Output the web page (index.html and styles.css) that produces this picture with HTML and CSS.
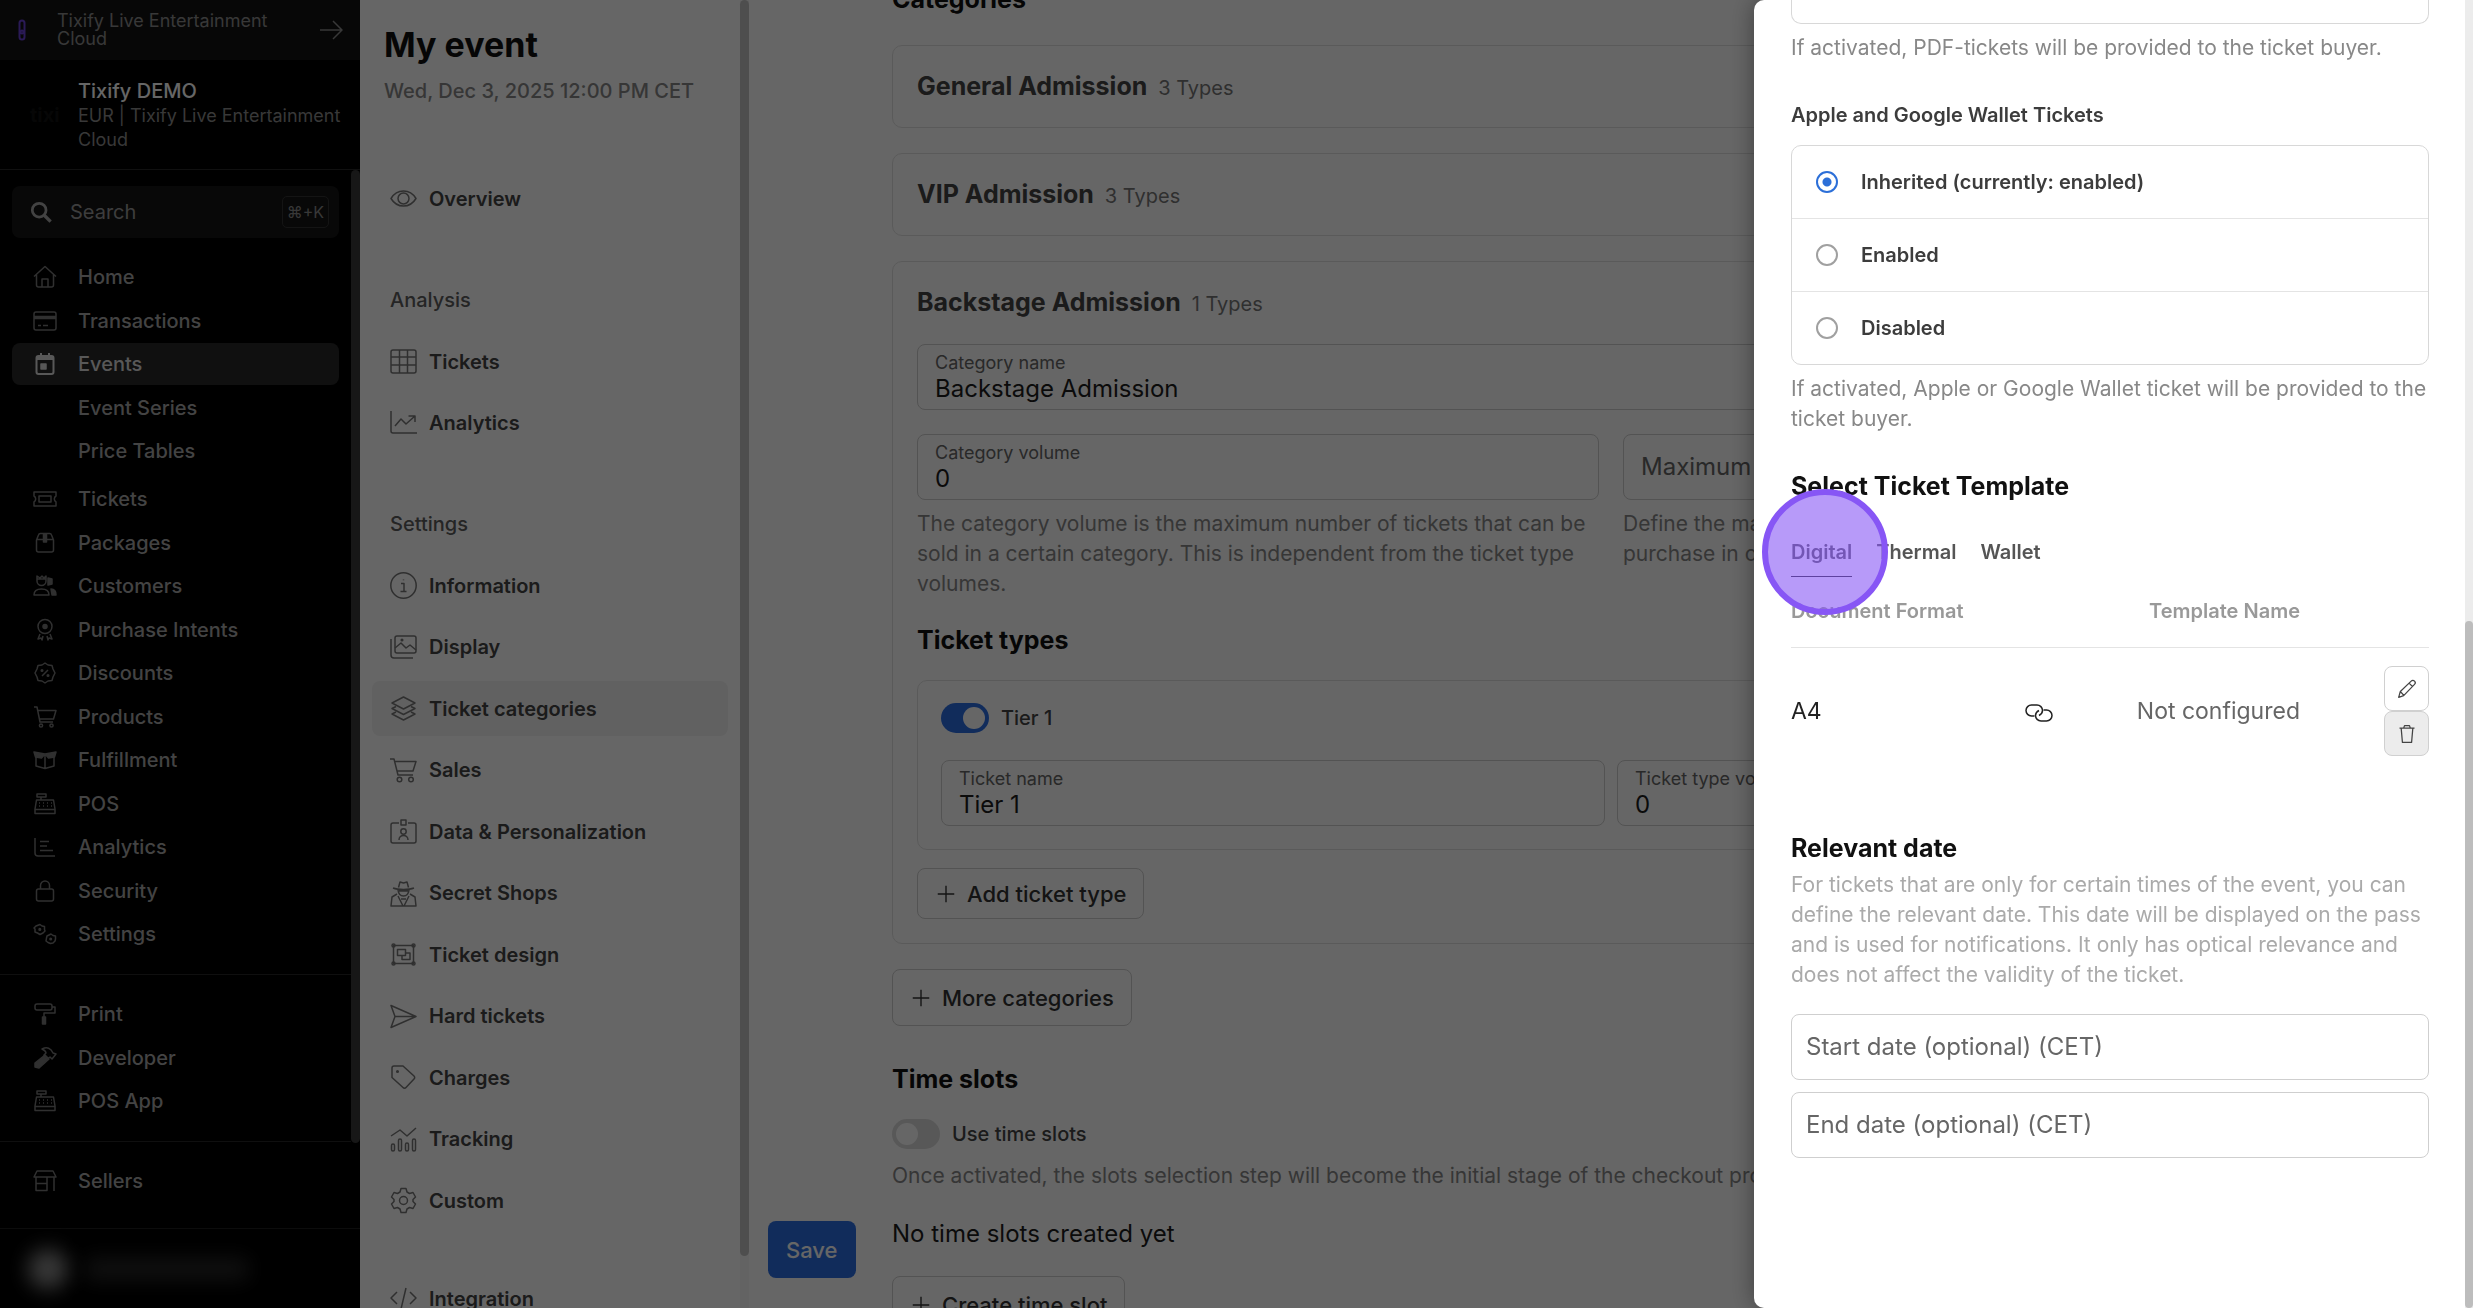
FILE: index.html
```html
<!DOCTYPE html>
<html lang="en">
<head>
  <meta charset="UTF-8" />
  <meta name="viewport" content="width=device-width, initial-scale=1.0" />
  <title>My event - Ticket categories</title>
  <link rel="stylesheet" href="styles.css">
</head>
<body>

  <!-- Icon sprite -->
  <svg class="sprite" aria-hidden="true">
    <symbol id="i-arrow" viewBox="0 0 24 24"><path d="M1 12h21M14 3l9 9-9 9"/></symbol>
    <symbol id="i-search" viewBox="0 0 24 24"><circle cx="10" cy="10" r="7.5" stroke-width="3"/><path d="M15.5 15.5l7 7" stroke-width="3.6"/></symbol>
    <symbol id="i-home" viewBox="0 0 24 24"><path d="M1 11.5L12 1.5l11 10M3.5 9.5V20a2 2 0 0 0 2 2h13a2 2 0 0 0 2-2V9.500M9 22v-8h6v8"/></symbol>
    <symbol id="i-card" viewBox="0 0 24 24"><rect x="1" y="3" width="22" height="18" rx="2"/><path d="M1 8.500h22" stroke-width="3.500"/><path d="M5 16.500h3M10 16.500h5"/></symbol>
    <symbol id="i-calendar" viewBox="0 0 24 24"><rect x="3.500" y="4" width="17" height="18" rx="2" stroke-width="2"/><path d="M3.500 6h17" stroke-width="4"/><path d="M8 1v4M16 1v4" stroke-width="2"/><path d="M8 12h5v5H8z" fill="currentColor"/></symbol>
    <symbol id="i-ticket" viewBox="0 0 24 24"><path d="M1 5h22v4a3.500 3.500 0 0 0 0 6v4H1v-4a3.500 3.500 0 0 0 0-6z"/><rect x="6" y="9" width="12" height="6"/></symbol>
    <symbol id="i-package" viewBox="0 0 24 24"><path d="M3.500 9l2-5a2 2 0 0 1 2-1.500h9a2 2 0 0 1 2 1.500l2 5v10a2 2 0 0 1-2 2h-13a2 2 0 0 1-2-2zM3.500 8.500h17"/><path d="M10.500 3v8h3V3" fill="currentColor"/></symbol>
    <symbol id="i-customers" viewBox="0 0 24 24"><path d="M4 2l3 2 2-2 2 2 2-2v5a4.500 4.500 0 0 1-9 0zM4 5h9M1 21c0-4 3-6 7.500-6s7.500 2 7.500 6z"/><path d="M15 4l4 1v5l-4 1zM18 15c3 0 5 2 5 6h-4z" fill="currentColor"/></symbol>
    <symbol id="i-award" viewBox="0 0 24 24"><circle cx="12" cy="8.500" r="7"/><circle cx="12" cy="8.500" r="2" fill="currentColor"/><path d="M7 16l-2 5 3-1 1 2 1-4M17 16l2 5-3-1-1 2-1-4"/></symbol>
    <symbol id="i-percent" viewBox="0 0 24 24"><path d="M12 2l3 2 4 .5 1 3.500 2 4-2 4-1 3.500-4 .5-3 2-3-2-4-.5L4 16l-2-4 2-4 1-3.500L9 4zM9 15l6-6"/><circle cx="9" cy="9.500" r=".8"/><circle cx="15" cy="14.500" r=".8"/></symbol>
    <symbol id="i-cart" viewBox="0 0 24 24"><path d="M1 2h3l3 15h13M4.800 5.500H23L20.500 14H6.500"/><circle cx="8" cy="20.500" r="1.600"/><circle cx="18.500" cy="20.500" r="1.600"/></symbol>
    <symbol id="i-box" viewBox="0 0 24 24"><path d="M1 4l11 2 11-2-1.500 5-6 1L12 6l-3.500 4-6-1z" fill="currentColor"/><path d="M3 9v9l9 2.500 9-2.500V9M12 7v13"/></symbol>
    <symbol id="i-pos" viewBox="0 0 24 24"><path d="M4 2h9v3H4zM8 5v3M3.500 8h17l1.500 9v4.500H2V17zM2 17.500h20"/><path d="M6 11h1M10 11h1M14 11h1M18 11h1M6 14h1M10 14h1M14 14h1M18 14h1"/></symbol>
    <symbol id="i-bars" viewBox="0 0 24 24"><path d="M2 3v15a3 3 0 0 0 3 3h17M7 6.500h9M7 11h7M7 15.500h13"/></symbol>
    <symbol id="i-lock" viewBox="0 0 24 24"><rect x="3.500" y="10" width="17" height="12" rx="2"/><path d="M7.500 10V6.500a4.500 4.500 0 0 1 9 0V10"/></symbol>
    <symbol id="i-gears" viewBox="0 0 24 24"><path d="M7 2.500l2 1.500 2.500.5v3L12 9l-2 2-3 1.500L4.500 11 2 10V7L1 6l2-2zM18 12l2 1.500 2.500.5v3L22 19l-2 2-2.500.5L15 20.500l-2-1.500.5-3 .5-2z"/><circle cx="6.800" cy="7.400" r=".8"/><circle cx="17.700" cy="17" r=".8"/></symbol>
    <symbol id="i-roller" viewBox="0 0 24 24"><rect x="2" y="2" width="17" height="6" rx="2"/><path d="M19 5h3v6H11v4"/><path d="M9.500 15h3v7h-3z" fill="currentColor"/></symbol>
    <symbol id="i-hammer" viewBox="0 0 24 24"><path d="M12 9l4 4-10 9-4-1 0-4z" fill="currentColor"/><path d="M9 3c5-2.500 9-1 11 4l3 1-4 5-2-2-3 2-3-4 2-2c0-2-2-3-4-4z"/></symbol>
    <symbol id="i-store" viewBox="0 0 24 24"><path d="M4 2h16l3 6H1zM3 8v13.500h11V8M3 14.500h11M21 8v14"/></symbol>
    <symbol id="i-eye" viewBox="0 0 27 27"><path d="M1 13.500C7 3.500 20 3.500 26 13.500 20 23.500 7 23.500 1 13.500z"/><circle cx="13.500" cy="13.500" r="5.500"/></symbol>
    <symbol id="i-grid" viewBox="0 0 27 27"><rect x="1" y="2" width="25" height="23" rx="2"/><path d="M1 9h25M1 17h25M9.500 2v23M17.500 2v23"/></symbol>
    <symbol id="i-trend" viewBox="0 0 27 27"><path d="M1 2v20a2 2 0 0 0 2 2h24M5 17l6-7 5 5 9-8M18.500 7H25v6"/></symbol>
    <symbol id="i-info" viewBox="0 0 27 27"><circle cx="13.500" cy="13.500" r="12.700"/><path d="M11 11.500h3v7.500M10.500 19.500h6M13.500 7.500v.8"/></symbol>
    <symbol id="i-images" viewBox="0 0 27 27"><rect x="5" y="2" width="21" height="17" rx="2"/><path d="M1 5v16a3 3 0 0 0 3 3h19M5 14l6-5 5 5 4-3 6 5"/><circle cx="12" cy="6" r=".8"/></symbol>
    <symbol id="i-layers" viewBox="0 0 27 27"><path d="M13.500 2L25 8l-11.500 6L2 8zM6 11.500L2 13.500l11.500 6 11.500-6-4-2M6 17l-4 2 11.500 6L25 19l-4-2"/></symbol>
    <symbol id="i-cart2" viewBox="0 0 27 27"><path d="M0 2h4l4 16h15M4.600 4.500H26L23 14H7"/><circle cx="9.500" cy="22.500" r="2.300"/><circle cx="21" cy="22.500" r="2.300"/></symbol>
    <symbol id="i-badge" viewBox="0 0 27 27"><path d="M9 5H3a2 2 0 0 0-2 2v16a2 2 0 0 0 2 2h21a2 2 0 0 0 2-2V7a2 2 0 0 0-2-2h-6M11 2h5v5h-5zM9 22c0-6 9-6 9 0"/><circle cx="13.500" cy="13.500" r="2.700"/></symbol>
    <symbol id="i-spy" viewBox="0 0 27 27"><path d="M3 8c5 2 16 2 21 0M8.500 7.500L10 2l3.500 1L17 2l1.500 5.500M8 10c1 8 10 8 11 0M7 14l-5 3-1 9h25l-1-9-5-3M8 16l5 10M19 16l-5 10M9 11h9M11 19h5"/></symbol>
    <symbol id="i-design" viewBox="0 0 27 27"><rect x="3.500" y="4.500" width="20" height="18"/><rect x="7.500" y="8.500" width="8" height="6"/><path d="M15.500 12H20v6.500h-8V15"/><circle cx="3.500" cy="4.500" r="1.500"/><circle cx="23.500" cy="4.500" r="1.500"/><circle cx="3.500" cy="22.500" r="1.500"/><circle cx="23.500" cy="22.500" r="1.500"/></symbol>
    <symbol id="i-send" viewBox="0 0 27 27"><path d="M1 2.500l25 11-25 11 4-11zM5 13.500h21"/></symbol>
    <symbol id="i-tag" viewBox="0 0 27 27"><path d="M2 4a2 2 0 0 1 2-2h9l11 10a2 2 0 0 1 0 3l-8 8.500a2 2 0 0 1-3 0L2 13.500z"/><circle cx="7.500" cy="7.500" r=".8"/></symbol>
    <symbol id="i-track" viewBox="0 0 27 27"><path d="M1 10l9-6 7 6 9-8"/><rect x="1.500" y="18" width="3" height="7" rx="1.500"/><rect x="8.500" y="13" width="3" height="12" rx="1.500"/><rect x="15.500" y="17" width="3" height="8" rx="1.500"/><rect x="22.500" y="13" width="3" height="12" rx="1.500"/></symbol>
    <symbol id="i-gear" viewBox="0 0 27 27"><path d="M11 1.500h5l1 3.500 2.500 1.500L23 5.500 25.500 10 23 12.500v2l2.500 2.500-2.500 4.500-3.500-1L17 22l-1 3.500h-5L10 22l-2.500-1.500-3.500 1L1.500 17 4 14.500v-2L1.500 10 4 5.500l3.500 1L10 5z"/><circle cx="13.500" cy="13.500" r="4"/></symbol>
    <symbol id="i-code" viewBox="0 0 27 27"><path d="M7 7l-6 6 6 6M20 7l6 6-6 6M16 3l-5 21"/></symbol>
    <symbol id="i-plus" viewBox="0 0 24 24"><path d="M12 3v18M3 12h18"/></symbol>
    <symbol id="i-link" viewBox="0 0 28 18"><path d="M9.500 12H6.500A5.500 5.500 0 0 1 1 6.500a5.500 5.500 0 0 1 5.500-5.500h5.500a5.500 5.500 0 0 1 5.500 5.500c0 2-1.500 4-3.500 5"/><path d="M18.500 6h3a5.500 5.500 0 0 1 5.500 5.500a5.500 5.500 0 0 1-5.500 5.500H16a5.500 5.500 0 0 1-5.500-5.500c0-2 1.500-4 3.500-5"/></symbol>
    <symbol id="i-pencil" viewBox="0 0 24 24"><path d="M2 22l2-7L17 2.500a2.500 2.500 0 0 1 4 4L8 20zM14.500 5l4 4M4 15l4.500 5"/></symbol>
    <symbol id="i-trash" viewBox="0 0 24 24"><path d="M3 5h18M8 5l1-3h6l1 3M5 5l1.500 17h11L19 5"/></symbol>
  </svg>

  <div class="app">
    <aside class="sidebar">
      <a class="org" href="#">
        <svg class="org-mark" viewBox="0 0 8 22"><rect x="1.500" y="1.500" width="5" height="19" rx="2.500"/><circle cx="4" cy="13" r="1.500"/></svg>
        <span>Tixify Live Entertainment Cloud</span>
        <svg class="icon"><use href="#i-arrow"/></svg>
      </a>
      <div class="account">
        <span class="account-logo">tixi</span>
        <div>
          <strong>Tixify DEMO</strong>
          <p>EUR | Tixify Live Entertainment Cloud</p>
        </div>
      </div>

      <div class="sidebar-scroll">
        <nav class="side-nav">
          <label class="search">
            <svg class="icon"><use href="#i-search"/></svg>
            <input type="search" placeholder="Search" aria-label="Search" />
            <kbd>⌘+K</kbd>
          </label>
          <ul class="nav-list nav-list-top">
            <li><a href="#"><svg class="icon"><use href="#i-home"/></svg>Home</a></li>
            <li><a href="#"><svg class="icon"><use href="#i-card"/></svg>Transactions</a></li>
            <li><a href="#" class="active"><svg class="icon"><use href="#i-calendar"/></svg>Events</a></li>
            <li><a href="#" class="sub">Event Series</a></li>
            <li><a href="#" class="sub">Price Tables</a></li>
          </ul>
          <ul class="nav-list nav-list-main">
            <li><a href="#"><svg class="icon"><use href="#i-ticket"/></svg>Tickets</a></li>
            <li><a href="#"><svg class="icon"><use href="#i-package"/></svg>Packages</a></li>
            <li><a href="#"><svg class="icon"><use href="#i-customers"/></svg>Customers</a></li>
            <li><a href="#"><svg class="icon"><use href="#i-award"/></svg>Purchase Intents</a></li>
            <li><a href="#"><svg class="icon"><use href="#i-percent"/></svg>Discounts</a></li>
            <li><a href="#"><svg class="icon"><use href="#i-cart"/></svg>Products</a></li>
            <li><a href="#"><svg class="icon"><use href="#i-box"/></svg>Fulfillment</a></li>
            <li><a href="#"><svg class="icon"><use href="#i-pos"/></svg>POS</a></li>
            <li><a href="#"><svg class="icon"><use href="#i-bars"/></svg>Analytics</a></li>
            <li><a href="#"><svg class="icon"><use href="#i-lock"/></svg>Security</a></li>
            <li><a href="#"><svg class="icon"><use href="#i-gears"/></svg>Settings</a></li>
          </ul>
          <ul class="nav-list nav-list-tools">
            <li><a href="#"><svg class="icon"><use href="#i-roller"/></svg>Print</a></li>
            <li><a href="#"><svg class="icon"><use href="#i-hammer"/></svg>Developer</a></li>
            <li><a href="#"><svg class="icon"><use href="#i-pos"/></svg>POS App</a></li>
          </ul>
          <ul class="nav-list nav-list-sellers">
            <li><a href="#"><svg class="icon"><use href="#i-store"/></svg>Sellers</a></li>
          </ul>
        </nav>
        <div class="scrollbar"><div class="thumb"></div></div>
      </div>

      <div class="user">
        <span class="avatar"></span>
        <span class="user-name"></span>
      </div>
    </aside>

    <aside class="event-panel">
      <div class="event-nav">
        <h1>My event</h1>
        <p class="event-date">Wed, Dec 3, 2025 12:00 PM CET</p>

        <ul class="menu menu-overview">
          <li><a href="#"><svg class="icon"><use href="#i-eye"/></svg>Overview</a></li>
        </ul>

        <h2>Analysis</h2>
        <ul class="menu">
          <li><a href="#"><svg class="icon"><use href="#i-grid"/></svg>Tickets</a></li>
          <li><a href="#"><svg class="icon"><use href="#i-trend"/></svg>Analytics</a></li>
        </ul>

        <h2>Settings</h2>
        <ul class="menu menu-settings">
          <li><a href="#"><svg class="icon"><use href="#i-info"/></svg>Information</a></li>
          <li><a href="#"><svg class="icon"><use href="#i-images"/></svg>Display</a></li>
          <li><a href="#" class="active"><svg class="icon"><use href="#i-layers"/></svg>Ticket categories</a></li>
          <li><a href="#"><svg class="icon"><use href="#i-cart2"/></svg>Sales</a></li>
          <li><a href="#"><svg class="icon"><use href="#i-badge"/></svg>Data &amp; Personalization</a></li>
          <li><a href="#"><svg class="icon"><use href="#i-spy"/></svg>Secret Shops</a></li>
          <li><a href="#"><svg class="icon"><use href="#i-design"/></svg>Ticket design</a></li>
          <li><a href="#"><svg class="icon"><use href="#i-send"/></svg>Hard tickets</a></li>
          <li><a href="#"><svg class="icon"><use href="#i-tag"/></svg>Charges</a></li>
          <li><a href="#"><svg class="icon"><use href="#i-track"/></svg>Tracking</a></li>
          <li><a href="#"><svg class="icon"><use href="#i-gear"/></svg>Custom</a></li>
        </ul>
        <ul class="menu menu-integration">
          <li><a href="#"><svg class="icon"><use href="#i-code"/></svg>Integration</a></li>
        </ul>
      </div>
      <div class="scrollbar"><div class="thumb"></div></div>
    </aside>

    <main class="main">
      <form class="content" id="event-form">
        <h2 class="first-heading">Categories</h2>

        <section class="card">
          <h3>General Admission <small>3 Types</small></h3>
        </section>
        <section class="card">
          <h3>VIP Admission <small>3 Types</small></h3>
        </section>

        <section class="card">
          <h3>Backstage Admission <small>1 Types</small></h3>
          <div class="field category-name">
            <label for="category-name">Category name</label>
            <input type="text" id="category-name" value="Backstage Admission" />
          </div>
          <div class="columns">
            <div>
              <div class="field">
                <label for="category-volume">Category volume</label>
                <input type="text" id="category-volume" value="0" />
              </div>
              <p class="help">The category volume is the maximum number of tickets that can be sold in a certain category. This is independent from the ticket type volumes.</p>
            </div>
            <div>
              <div class="field">
                <input type="text" placeholder="Maximum" aria-label="Maximum" />
              </div>
              <p class="help">Define the maximum number of tickets one can<br>purchase in one order.</p>
            </div>
          </div>

          <h2>Ticket types</h2>
          <div class="tier">
            <label class="toggle"><input type="checkbox" checked /> Tier 1</label>
            <div class="columns columns-tight">
              <div class="field">
                <label for="ticket-name">Ticket name</label>
                <input type="text" id="ticket-name" value="Tier 1" />
              </div>
              <div class="field">
                <label for="ticket-volume">Ticket type volume</label>
                <input type="text" id="ticket-volume" value="0" />
              </div>
            </div>
          </div>
          <button type="button" class="btn btn-small"><svg class="icon"><use href="#i-plus"/></svg>Add ticket type</button>
        </section>

        <button type="button" class="btn"><svg class="icon"><use href="#i-plus"/></svg>More categories</button>

        <section class="slots">
          <h2>Time slots</h2>
          <label class="toggle"><input type="checkbox" /> Use time slots</label>
          <p class="help">Once activated, the slots selection step will become the initial stage of the checkout process.</p>
          <p class="empty">No time slots created yet</p>
          <button type="button" class="btn"><svg class="icon"><use href="#i-plus"/></svg>Create time slot</button>
        </section>
      </form>
      <button type="submit" form="event-form" class="save">Save</button>
    </main>
  </div>

  <div class="backdrop"></div>

  <div class="drawer" role="dialog" aria-label="Ticket settings">
    <div class="drawer-body">
      <div class="options options-pdf"></div>
      <p class="help">If activated, PDF-tickets will be provided to the ticket buyer.</p>

      <h3 id="wallet-title">Apple and Google Wallet Tickets</h3>
      <div class="options" role="radiogroup" aria-labelledby="wallet-title">
        <label><input type="radio" name="wallet" checked /> Inherited (currently: enabled)</label>
        <label><input type="radio" name="wallet" /> Enabled</label>
        <label><input type="radio" name="wallet" /> Disabled</label>
      </div>
      <p class="help">If activated, Apple or Google Wallet ticket will be provided to the ticket buyer.</p>

      <h2>Select Ticket Template</h2>
      <div class="tabs" role="tablist">
        <button type="button" role="tab" aria-selected="true" class="active">Digital<span class="click-marker"></span></button>
        <button type="button" role="tab">Thermal</button>
        <button type="button" role="tab">Wallet</button>
      </div>
      <table>
        <thead>
          <tr>
            <th>Document Format</th>
            <th class="link"></th>
            <th class="name">Template Name</th>
            <th class="actions"></th>
          </tr>
        </thead>
        <tbody>
          <tr>
            <td>A4</td>
            <td class="link"><svg class="icon"><use href="#i-link"/></svg></td>
            <td class="name">Not configured</td>
            <td class="actions">
              <button type="button" aria-label="Edit"><svg class="icon"><use href="#i-pencil"/></svg></button>
              <button type="button" aria-label="Delete" disabled><svg class="icon"><use href="#i-trash"/></svg></button>
            </td>
          </tr>
        </tbody>
      </table>

      <h2 class="date-heading">Relevant date</h2>
      <p class="help help-light">For tickets that are only for certain times of the event, you can define the relevant date. This date will be displayed on the pass and is used for notifications. It only has optical relevance and does not affect the validity of the ticket.</p>
      <div class="dates">
        <div class="field"><input type="text" placeholder="Start date (optional) (CET)" aria-label="Start date (optional) (CET)" /></div>
        <div class="field"><input type="text" placeholder="End date (optional) (CET)" aria-label="End date (optional) (CET)" /></div>
      </div>
    </div>
    <div class="scrollbar"><div class="thumb"></div></div>
  </div>

</body>
</html>
```
FILE: styles.css
```css
* {
  box-sizing: border-box;
}

body {
  margin: 0;
  height: 100vh;
  overflow: hidden;
  font-family: Inter, "Liberation Sans", sans-serif;
  font-size: 20px;
  line-height: 30px;
  color: #3c3c3c;
  background: #fff;
}

h1, h2, h3, p, ul {
  margin: 0;
  padding: 0;
}

ul {
  list-style: none;
}

a {
  color: inherit;
  text-decoration: none;
}

button, input {
  font: inherit;
  color: inherit;
}

button {
  cursor: pointer;
}

.sprite {
  display: none;
}

.icon {
  flex: none;
  width: 24px;
  height: 24px;
  fill: none;
  stroke: currentColor;
  stroke-width: 1.5;
  stroke-linejoin: round;
}

.app {
  display: flex;
  height: 100vh;
  overflow: hidden;
}

.scrollbar {
  flex: none;
  width: 9px;
}

.thumb {
  border-radius: 5px;
}

/* Main sidebar */
.sidebar {
  flex: none;
  display: flex;
  flex-direction: column;
  width: 360px;
  height: 100vh;
  background: #000;
  color: #a8a8a8;
}

.org {
  display: flex;
  align-items: center;
  height: 60px;
  padding: 0 17px 0 18px;
  background: #131313;
  color: #8c8c8c;
  font-size: 18px;
  line-height: 18px;
}

.org span {
  flex: 1;
  padding: 0 31px;
}

.org-mark {
  width: 8px;
  height: 22px;
  fill: none;
  stroke: #6a43d8;
  stroke-width: 2;
}

.account {
  display: flex;
  align-items: center;
  padding: 18px 12px 17px 0;
  border-bottom: 1px solid #2a2a2a;
  font-size: 18px;
  line-height: 24px;
  color: #8c8c8c;
}

.account-logo {
  flex: none;
  width: 78px;
  padding-left: 30px;
  font-size: 20px;
  font-weight: 700;
  color: #101010;
}

.account strong {
  display: block;
  font-size: 20px;
  font-weight: 500;
  line-height: 26px;
  color: #fff;
}

.sidebar-scroll {
  flex: 1;
  display: flex;
  min-height: 0;
  overflow: hidden;
}

.side-nav {
  flex: 1;
  min-width: 0;
  font-weight: 500;
}

.sidebar-scroll .thumb {
  height: 92%;
  background: #3a3a3a;
}

.search {
  display: flex;
  align-items: center;
  height: 52px;
  margin: 16px 12px 18px;
  padding: 0 10px 0 18px;
  border-radius: 8px;
  background: #151515;
}

.search .icon {
  width: 22px;
  height: 22px;
}

.search input {
  flex: 1;
  min-width: 0;
  margin-left: 18px;
  padding: 0;
  border: 0;
  background: none;
  font-weight: 400;
}

.search input::placeholder {
  color: #9a9a9a;
  opacity: 1;
}

.search kbd {
  padding: 0 4px;
  border: 1px solid #333;
  border-radius: 5px;
  font-family: inherit;
  font-size: 16px;
  font-weight: 400;
  color: #8c8c8c;
}

.nav-list {
  display: flex;
  flex-direction: column;
  justify-content: space-between;
  padding: 0 12px;
}

.nav-list-top {
  min-height: 216px;
}

.nav-list-main {
  min-height: 477px;
  margin-top: 6px;
}

.nav-list-tools,
.nav-list-sellers {
  margin-top: 19px;
  padding-top: 18px;
  border-top: 1px solid #262626;
}

.nav-list-tools {
  min-height: 148px;
}

.nav-list a {
  display: flex;
  align-items: center;
  gap: 21px;
  height: 42px;
  padding: 0 21px;
  border-radius: 8px;
}

.nav-list .icon {
  color: #787878;
}

.nav-list .sub {
  padding-left: 66px;
}

.nav-list .active {
  background: #282828;
  color: #dcdcdc;
}

.nav-list .active .icon {
  color: #dcdcdc;
}

.user {
  display: flex;
  align-items: center;
  gap: 18px;
  height: 80px;
  padding: 0 28px;
  border-top: 1px solid #1e1e1e;
}

.avatar,
.user-name {
  filter: blur(10px);
}

.avatar {
  width: 40px;
  height: 40px;
  border-radius: 50%;
  background: #8c8c8c;
}

.user-name {
  width: 162px;
  height: 22px;
  background: #2a2a2a;
}

/* Event sidebar */
.event-panel {
  flex: none;
  display: flex;
  width: 389px;
  overflow: hidden;
  color: #444;
}

.event-nav {
  flex: 1;
  padding: 25px 12px 0;
  font-weight: 500;
}

.event-nav h1 {
  padding: 0 12px;
  font-size: 34px;
  font-weight: 700;
  line-height: 40px;
  color: #111;
}

.event-date {
  margin-top: 11px;
  padding: 0 12px;
  color: #888;
  white-space: nowrap;
}

.event-nav h2 {
  margin: 59px 18px 19px;
  font-size: 20px;
  font-weight: 500;
  line-height: 30px;
  color: #5c5c5c;
}

.menu {
  display: flex;
  flex-direction: column;
  justify-content: space-between;
  gap: 6px;
  font-weight: 600;
}

.menu-overview {
  margin-top: 65px;
}

.menu-settings {
  min-height: 670px;
}

.menu-integration {
  margin-top: 43px;
}

.menu a {
  display: flex;
  align-items: center;
  gap: 12px;
  height: 55px;
  padding: 0 18px;
  border-radius: 8px;
}

.menu .icon {
  width: 27px;
  height: 27px;
  color: #777;
}

.menu .active {
  background: #f3f3f3;
}

.event-panel .scrollbar {
  background: #f7f7f7;
}

.event-panel .thumb {
  height: 96%;
  background: #c4c4c4;
}

/* Main content */
.main {
  position: relative;
  flex: 1;
  min-width: 0;
}

.content {
  max-width: 1438px;
  margin: 0 auto;
}

.content h2,
.drawer h2 {
  font-size: 25px;
  font-weight: 700;
  line-height: 33px;
  color: #111;
}

/* the list is scrolled, the first heading is half out of view */
.content .first-heading {
  margin: -17px 0 29px;
}

.card {
  margin-bottom: 25px;
  padding: 24px;
  border: 1px solid #e2e2e2;
  border-radius: 10px;
}

.card h3 {
  font-size: 25px;
  font-weight: 700;
  line-height: 33px;
  color: #444;
}

.card small {
  margin-left: 5px;
  font-size: 20px;
  font-weight: 400;
  line-height: 20px;
  color: #777;
}

.card h2 {
  margin: 25px 0 23px;
}

.field {
  display: flex;
  flex-direction: column;
  justify-content: center;
  height: 66px;
  padding: 0 17px;
  border: 1px solid #cfcfcf;
  border-radius: 8px;
}

.field label {
  font-size: 18px;
  line-height: 24px;
  color: #666;
}

.field input {
  width: 100%;
  padding: 0;
  border: 0;
  background: none;
  font-size: 24px;
  line-height: 28px;
  color: #1c1c1c;
}

.field input:focus {
  outline: none;
}

.field input::placeholder {
  color: #666;
  opacity: 1;
}

.category-name {
  margin: 25px 0 24px;
}

.columns {
  display: grid;
  grid-template-columns: 1fr 1fr;
  gap: 24px;
}

.columns-tight {
  gap: 12px;
  margin-top: 27px;
}

.help {
  margin-top: 9px;
  font-size: 21px;
  color: #888;
}

.tier {
  margin-bottom: 18px;
  padding: 22px 23px 23px;
  border: 1px solid #e2e2e2;
  border-radius: 10px;
}

.toggle {
  display: flex;
  align-items: center;
  gap: 12px;
  font-weight: 500;
  color: #444;
}

.toggle input {
  position: relative;
  appearance: none;
  width: 48px;
  height: 30px;
  margin: 0;
  border-radius: 15px;
  background: #dcdcdc;
}

.toggle input::before {
  content: "";
  position: absolute;
  top: 4px;
  left: 4px;
  width: 22px;
  height: 22px;
  border-radius: 50%;
  background: #fff;
}

.toggle input:checked {
  background: #2c6fe4;
}

.toggle input:checked::before {
  left: 22px;
}

.btn {
  display: flex;
  align-items: center;
  gap: 10px;
  height: 57px;
  padding: 0 17px;
  border: 1px solid #cfcfcf;
  border-radius: 8px;
  background: #fff;
  font-size: 22px;
  font-weight: 500;
  color: #333;
}

.btn .icon {
  width: 22px;
  height: 22px;
}

.btn-small {
  height: 51px;
}

.slots {
  margin-top: 37px;
}

.slots .toggle {
  margin-top: 23px;
}

.slots .help {
  margin-top: 12px;
  white-space: nowrap;
}

.empty {
  margin: 26px 0 25px;
  font-size: 24px;
  line-height: 34px;
  color: #1c1c1c;
}

.save {
  position: absolute;
  left: 19px;
  bottom: 30px;
  height: 57px;
  padding: 0 18px;
  border: 0;
  border-radius: 8px;
  background: #2c6fe4;
  font-size: 22px;
  font-weight: 500;
  color: #fff;
}

.backdrop {
  position: fixed;
  inset: 0;
  background: rgba(0, 0, 0, 0.6);
}

/* Drawer */
.drawer {
  position: fixed;
  top: 0;
  right: 0;
  bottom: 0;
  display: flex;
  width: 719px;
  max-width: 100%;
  overflow: hidden;
  border-radius: 10px 0 0 10px;
  background: #fff;
  box-shadow: 0 0 24px rgba(0, 0, 0, 0.4);
}

.drawer-body {
  flex: 1;
  padding: 0 36px 0 37px;
}

.drawer h3 {
  margin: 37px 0 15px;
  font-size: 20px;
  font-weight: 600;
  line-height: 30px;
}

.drawer h2 {
  margin-top: 36px;
}

.options {
  border: 1px solid #d8d8d8;
  border-radius: 10px;
}

.options-pdf {
  height: 24px;
  border-top: 0;
  border-radius: 0 0 10px 10px;
}

.options label {
  display: flex;
  align-items: center;
  gap: 23px;
  height: 72px;
  padding: 0 24px;
  font-weight: 600;
}

.options label + label {
  height: 73px;
  border-top: 1px solid #e4e4e4;
}

.options input {
  appearance: none;
  width: 22px;
  height: 22px;
  margin: 0;
  border: 2px solid #a0a0a0;
  border-radius: 50%;
}

.options input:checked {
  border-color: #2c6fd8;
  background: radial-gradient(circle, #2c6fd8 4px, #fff 5px);
}

.tabs {
  display: flex;
  gap: 24px;
  margin-top: 34px;
}

.tabs button {
  position: relative;
  padding: 0 0 9px;
  border: 0;
  border-bottom: 1px solid transparent;
  background: none;
  font-weight: 600;
  color: #555;
}

.tabs .active {
  border-color: #222;
}

/* highlights the spot that was clicked */
.click-marker {
  position: absolute;
  z-index: 1;
  top: -48px;
  left: -29px;
  width: 126px;
  height: 126px;
  border: 6px solid #8756f5;
  border-radius: 50%;
  background: rgba(135, 86, 245, 0.6);
}

table {
  width: 100%;
  border-collapse: collapse;
  table-layout: fixed;
}

th {
  padding: 19px 0 21px;
  border-bottom: 1px solid #e4e4e4;
  font-weight: 600;
  text-align: left;
  color: #999;
}

td {
  padding: 18px 0;
  font-size: 23px;
  color: #222;
}

.name {
  width: 200px;
  text-align: right;
}

td.name {
  color: #666;
}

.link {
  width: 120px;
  padding-right: 47px;
  text-align: right;
}

.link .icon {
  width: 28px;
  height: 18px;
  vertical-align: middle;
}

.actions {
  width: 129px;
}

.actions button {
  display: flex;
  align-items: center;
  justify-content: center;
  width: 45px;
  height: 45px;
  margin-left: auto;
  padding: 0;
  border: 1px solid #d0d0d0;
  border-radius: 8px;
  background: #fff;
  color: #444;
}

.actions button:disabled {
  background: #ececec;
}

.actions .icon {
  width: 20px;
  height: 20px;
}

.drawer .date-heading {
  margin-top: 58px;
}

.help-light {
  margin-top: 5px;
  color: #aaa;
}

.dates {
  display: grid;
  gap: 12px;
  margin-top: 24px;
}

.dates .field {
  padding: 0 14px;
}

.drawer .scrollbar {
  display: flex;
  flex-direction: column;
  justify-content: flex-end;
  width: 8px;
  background: #ececec;
}

.drawer .thumb {
  height: calc(100% * 21 / 40);
  background: #bdbdbd;
}
```
